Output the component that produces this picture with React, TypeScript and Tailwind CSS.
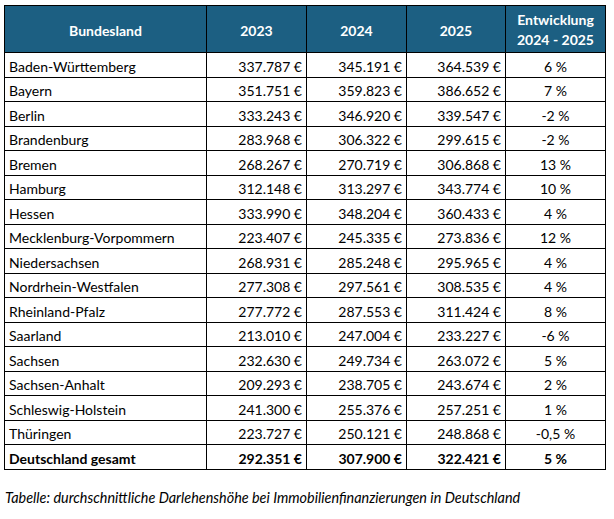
const rows: [string, string, string, string, string][] = [
  ["Baden-Württemberg", "337.787 €", "345.191 €", "364.539 €", "6 %"],
  ["Bayern", "351.751 €", "359.823 €", "386.652 €", "7 %"],
  ["Berlin", "333.243 €", "346.920 €", "339.547 €", "-2 %"],
  ["Brandenburg", "283.968 €", "306.322 €", "299.615 €", "-2 %"],
  ["Bremen", "268.267 €", "270.719 €", "306.868 €", "13 %"],
  ["Hamburg", "312.148 €", "313.297 €", "343.774 €", "10 %"],
  ["Hessen", "333.990 €", "348.204 €", "360.433 €", "4 %"],
  ["Mecklenburg-Vorpommern", "223.407 €", "245.335 €", "273.836 €", "12 %"],
  ["Niedersachsen", "268.931 €", "285.248 €", "295.965 €", "4 %"],
  ["Nordrhein-Westfalen", "277.308 €", "297.561 €", "308.535 €", "4 %"],
  ["Rheinland-Pfalz", "277.772 €", "287.553 €", "311.424 €", "8 %"],
  ["Saarland", "213.010 €", "247.004 €", "233.227 €", "-6 %"],
  ["Sachsen", "232.630 €", "249.734 €", "263.072 €", "5 %"],
  ["Sachsen-Anhalt", "209.293 €", "238.705 €", "243.674 €", "2 %"],
  ["Schleswig-Holstein", "241.300 €", "255.376 €", "257.251 €", "1 %"],
  ["Thüringen", "223.727 €", "250.121 €", "248.868 €", "-0,5 %"],
];

function DataRow({ cells, bold }: { cells: string[]; bold?: boolean }) {
  const weight = bold ? "font-bold" : "";
  return (
    <tr className="h-[24.5px]">
      <td className={`border border-black px-[4px] pb-[3px] align-bottom text-left ${weight}`}>{cells[0]}</td>
      <td className={`border border-black px-[4px] pb-[3px] align-bottom text-right ${weight}`}>{cells[1]}</td>
      <td className={`border border-black px-[4px] pb-[3px] align-bottom text-right ${weight}`}>{cells[2]}</td>
      <td className={`border border-black px-[4px] pb-[3px] align-bottom text-right ${weight}`}>{cells[3]}</td>
      <td className={`border border-black px-[4px] pb-[3px] align-bottom text-center ${weight}`}>{cells[4]}</td>
    </tr>
  );
}

export default function App() {
  return (
    <div className="min-h-screen bg-white pl-[4px] pt-[5px] font-['Lato',sans-serif] text-[14px] text-black">
      <table className="table-fixed border-collapse leading-none">
        <colgroup>
          <col className="w-[202px]" />
          <col className="w-[100px]" />
          <col className="w-[100px]" />
          <col className="w-[99px]" />
          <col className="w-[100px]" />
        </colgroup>
        <thead>
          <tr className="h-[47px] bg-[#1c5f82] text-white font-bold">
            <th className="border border-black pt-[3px]">Bundesland</th>
            <th className="border border-black pt-[3px]">2023</th>
            <th className="border border-black pt-[3px]">2024</th>
            <th className="border border-black pt-[3px]">2025</th>
            <th className="border border-black pt-[2px] leading-[20px]">
              Entwicklung
              <br />
              2024 - 2025
            </th>
          </tr>
        </thead>
        <tbody>
          {rows.map((r) => (
            <DataRow key={r[0]} cells={r} />
          ))}
          <DataRow cells={["Deutschland gesamt", "292.351 €", "307.900 €", "322.421 €", "5 %"]} bold />
        </tbody>
      </table>
      <p className="mt-[17px] pl-[1px] text-[14.4px] italic">
        Tabelle: durchschnittliche Darlehenshöhe bei Immobilienfinanzierungen in Deutschland
      </p>
    </div>
  );
}
